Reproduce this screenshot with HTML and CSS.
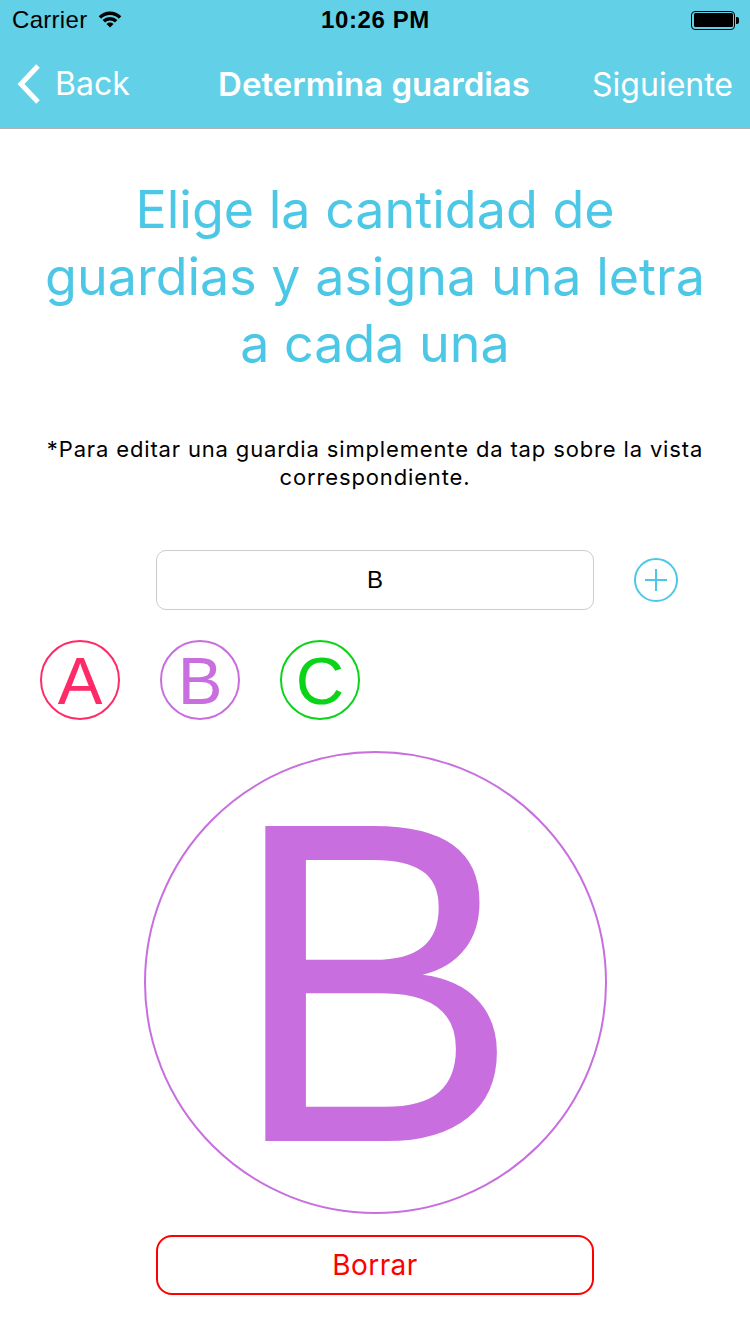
FILE: index.html
```html
<!DOCTYPE html>
<html lang="es">
<head>
<meta charset="utf-8">
<title>Determina guardias</title>
<link rel="stylesheet" href="styles.css">
</head>
<body>
<div class="screen">
  <header class="topbar">
    <div class="status">
      <div class="status-left">
        <span class="carrier">Carrier</span>
        <svg class="wifi" width="24" height="17" viewBox="0 0 24 17">
          <path d="M12 16.5 L8.46 12.96 A5 5 0 0 1 15.54 12.96 Z" fill="#000"/>
          <path d="M4.58 9.08 A10.5 10.5 0 0 1 19.42 9.08 L16.95 11.55 A7 7 0 0 0 7.05 11.55 Z" fill="#000"/>
          <path d="M0.69 5.19 A16 16 0 0 1 23.31 5.19 L20.84 7.66 A12.5 12.5 0 0 0 3.16 7.66 Z" fill="#000"/>
        </svg>
      </div>
      <div class="time">10:26 PM</div>
      <div class="battery">
        <span class="battery-body"><span class="battery-fill"></span></span>
        <span class="battery-tip"></span>
      </div>
    </div>
    <nav class="navbar">
      <div class="nav-left">
        <svg class="chevron" width="28" height="42" viewBox="0 0 28 42">
          <polyline points="23,3 6,21 23,39" fill="none" stroke="#fff" stroke-width="5"/>
        </svg>
        <span class="nav-link">Back</span>
      </div>
      <div class="nav-title">Determina guardias</div>
      <div class="nav-right"><span class="nav-link">Siguiente</span></div>
    </nav>
  </header>

  <main class="content">
    <h1 class="heading">Elige la cantidad de<br>guardias y asigna una letra<br>a cada una</h1>
    <p class="hint">*Para editar una guardia simplemente da tap sobre la vista<br>correspondiente.</p>

    <div class="input-row">
      <div class="field">B</div>
      <div class="add">
        <svg width="46" height="46" viewBox="0 0 46 46">
          <circle cx="23" cy="23" r="21" fill="none" stroke="#4cc8e6" stroke-width="2"/>
          <line x1="12" y1="23" x2="34" y2="23" stroke="#4cc8e6" stroke-width="2"/>
          <line x1="23" y1="12" x2="23" y2="34" stroke="#4cc8e6" stroke-width="2"/>
        </svg>
      </div>
    </div>

    <div class="chips">
      <div class="chip chip-a">A</div>
      <div class="chip chip-b">B</div>
      <div class="chip chip-c">C</div>
    </div>

    <div class="big-wrap">
      <div class="big"><span class="big-letter">B</span></div>
    </div>

    <div class="btn-wrap">
      <button class="delete">Borrar</button>
    </div>
  </main>
</div>
</body>
</html>
```

FILE: styles.css
```css
* { box-sizing: border-box; }
html, body {
  margin: 0;
  padding: 0;
  background: #fff;
}
body {
  font-family: "Inter", "Liberation Sans", sans-serif;
  width: 750px;
  height: 1334px;
  overflow: hidden;
}
.screen {
  width: 750px;
  height: 1334px;
  display: flex;
  flex-direction: column;
}
.topbar {
  background: #62d0e7;
  border-bottom: 1px solid #b3b3b3;
}
.status {
  height: 40px;
  display: grid;
  grid-template-columns: 1fr auto 1fr;
  align-items: center;
  padding: 0 11px 0 12px;
}
.status-left {
  display: flex;
  align-items: center;
  gap: 11px;
}
.carrier {
  font-family: "Liberation Sans", sans-serif;
  font-size: 24px;
  color: #000;
  letter-spacing: 0.3px;
}
.wifi { display: block; margin-top: -1px; }
.time {
  font-family: "Liberation Sans", sans-serif;
  font-weight: bold;
  font-size: 24px;
  color: #000;
  letter-spacing: 0.6px;
}
.battery {
  justify-self: end;
  display: flex;
  align-items: center;
}
.battery-body {
  width: 44px;
  height: 19px;
  border: 1.5px solid #000;
  border-radius: 4px;
  padding: 1.5px;
  display: flex;
}
.battery-fill {
  flex: 1;
  background: #000;
  border-radius: 1.5px;
}
.battery-tip {
  width: 3px;
  height: 7px;
  background: #000;
  border-radius: 0 2px 2px 0;
  margin-left: 1px;
}
.navbar {
  height: 88px;
  display: grid;
  grid-template-columns: 1fr auto 1fr;
  align-items: center;
  padding: 0 17px 0 15px;
  color: #fff;
}
.nav-left {
  display: flex;
  align-items: center;
  gap: 12px;
  margin-top: -1px;
}
.chevron { display: block; }
.nav-link {
  font-size: 32px;
  font-weight: 400;
  color: #fff;
}
.nav-title {
  font-size: 33px;
  font-weight: 600;
  color: #fff;
}
.nav-right {
  justify-self: end;
}
.content {
  display: flex;
  flex-direction: column;
  align-items: stretch;
}
.heading {
  margin: 47px 0 0;
  font-size: 52px;
  font-weight: 400;
  line-height: 67px;
  color: #4cc8e6;
  text-align: center;
}
.hint {
  margin: 58px 0 0;
  font-size: 22px;
  line-height: 28px;
  color: #000;
  text-align: center;
  letter-spacing: 0.85px;
}
.input-row {
  margin-top: 59px;
  padding-left: 156px;
  display: flex;
  align-items: center;
  gap: 39px;
}
.field {
  width: 438px;
  height: 60px;
  border: 1px solid #cccccc;
  border-radius: 10px;
  display: flex;
  align-items: center;
  justify-content: center;
  font-family: "Liberation Sans", sans-serif;
  font-size: 24px;
  color: #000;
}
.add {
  width: 46px;
  height: 46px;
}
.add svg { display: block; }
.chips {
  margin-top: 30px;
  padding-left: 40px;
  display: flex;
  gap: 40px;
}
.chip {
  width: 80px;
  height: 80px;
  border-radius: 50%;
  border: 2px solid currentColor;
  display: flex;
  align-items: center;
  justify-content: center;
  font-family: "Liberation Sans", sans-serif;
  font-size: 67px;
  line-height: 1;
  padding-top: 1px;
}
.chip-a { color: #ff2a68; }
.chip-b { color: #c86edf; }
.chip-c { color: #0bd318; }
.big-wrap {
  margin-top: 31px;
  display: flex;
  justify-content: center;
}
.big {
  width: 463px;
  height: 463px;
  border-radius: 50%;
  border: 2px solid #c86edf;
  display: flex;
  align-items: center;
  justify-content: center;
  font-family: "Liberation Sans", sans-serif;
  font-size: 458px;
  line-height: 1;
  color: #c86edf;
  padding-bottom: 2px;
}
.big-letter {
  display: inline-block;
  transform: scaleX(0.95);
}
.btn-wrap {
  margin-top: 21px;
  display: flex;
  justify-content: center;
}
.delete {
  width: 438px;
  height: 60px;
  border: 2px solid #ff0000;
  border-radius: 16px;
  background: #fff;
  color: #ff0000;
  font-family: "Inter", "Liberation Sans", sans-serif;
  font-size: 28px;
  letter-spacing: 0.4px;
  padding: 0;
}
```
